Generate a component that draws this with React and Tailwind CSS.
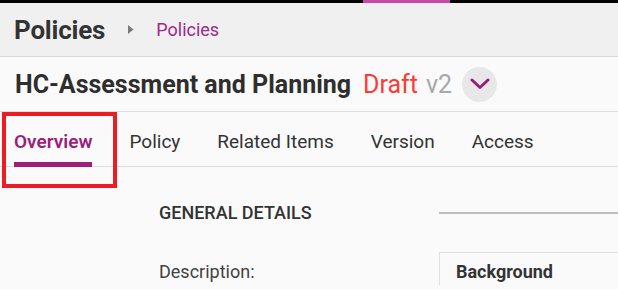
import React from "react";

export default function App() {
  const tabs = ["Overview", "Policy", "Related Items", "Version", "Access"];
  return (
    <div className="relative w-[618px] h-[289px] overflow-hidden bg-[#fafafa] font-['Roboto',sans-serif] text-[#333]">
      {/* top bar */}
      <div className="flex h-[3px] bg-black">
        <div className="ml-[363px] w-[87px] bg-[#c94aa6]" />
      </div>
      {/* header */}
      <div className="flex h-[54px] items-center border-b border-[#d9d9d9] bg-[#f0f0f0] pl-[14px]">
        <span className="text-[26px] font-bold leading-none tracking-[-0.2px] text-[#333]">Policies</span>
        <svg className="ml-[23px]" width="6" height="9" viewBox="0 0 6 9">
          <path d="M0 0 L5.5 4.5 L0 9 Z" fill="#7a7a7a" />
        </svg>
        <span className="ml-[22px] text-[18px] leading-none text-[#a1288a]">Policies</span>
      </div>
      {/* title row */}
      <div className="flex h-[55px] items-center border-b border-[#dedede] pl-[15px]">
        <span className="text-[25px] font-bold leading-none text-[#2e2e2e]">HC-Assessment and Planning</span>
        <span className="ml-[12px] text-[25px] leading-none text-[#fa3b36]">Draft</span>
        <span className="ml-[8px] text-[25px] leading-none text-[#a8a8a8]">v2</span>
        <button className="ml-[10px] flex h-[35px] w-[35px] items-center justify-center rounded-full bg-[#e8e8e8]">
          <svg width="20" height="12" viewBox="0 0 20 12">
            <path d="M2 2 L10 9.5 L18 2" fill="none" stroke="#9b1f7b" strokeWidth="3" strokeLinecap="round" strokeLinejoin="round" />
          </svg>
        </button>
      </div>
      {/* tabs */}
      <div className="flex h-[55px] items-stretch gap-[37px] border-b border-[#dcdcdc] pl-[14px] pt-[7px]">
        {tabs.map((t, i) => (
          <div key={t} className="relative flex items-center">
            <span className={i === 0 ? "text-[19px] font-semibold text-[#9b1f7b]" : "text-[19px] text-[#333]"}>{t}</span>
            {i === 0 && <div className="absolute bottom-[-1px] left-0 right-0 h-[5px] bg-[#9b1f7b]" />}
          </div>
        ))}
      </div>
      {/* content */}
      <div className="flex flex-col pl-[159px] pt-[32px]">
        <div className="flex items-center">
          <span className="w-[280px] text-[18px] font-medium text-[#333]">GENERAL DETAILS</span>
          <div className="h-[2px] flex-1 bg-[#bdbdbd]" />
        </div>
        <div className="mt-[26px] flex">
          <span className="w-[280px] pt-[6px] text-[18px] text-[#424242]">Description:</span>
          <div className="flex-1 border-l border-t border-[#e0e0e0] pl-[16px] pt-[5px]">
            <span className="text-[18px] font-bold text-[#333]">Background</span>
          </div>
        </div>
      </div>
      {/* red highlight box */}
      <div className="pointer-events-none absolute left-[2px] top-[112px] h-[76px] w-[115px] border-[4px] border-[#ed1c24]" />
    </div>
  );
}
